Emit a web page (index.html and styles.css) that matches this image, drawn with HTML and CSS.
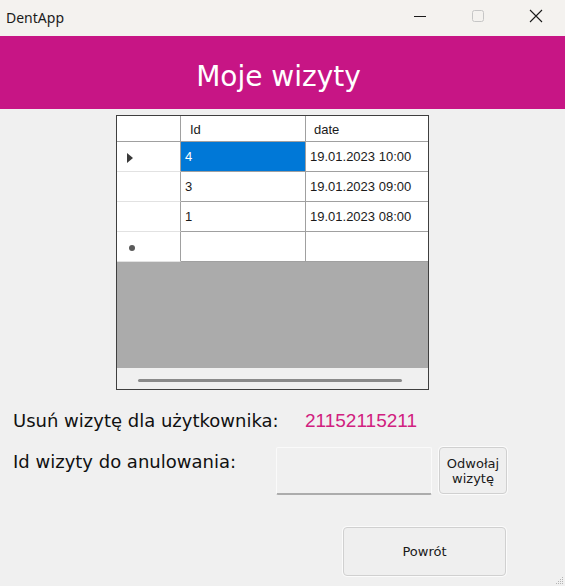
FILE: index.html
```html
<!DOCTYPE html>
<html lang="pl">
<head>
<meta charset="utf-8">
<title>DentApp</title>
<link rel="stylesheet" href="styles.css">
</head>
<body>
<div class="window">
  <div class="titlebar">
    <span class="app-name">DentApp</span>
    <div class="controls">
      <span class="ctl"><svg width="14" height="14" viewBox="0 0 14 14"><line x1="1" y1="7.5" x2="13" y2="7.5" stroke="#1a1a1a" stroke-width="1"/></svg></span>
      <span class="ctl"><svg width="14" height="14" viewBox="0 0 14 14"><rect x="1.5" y="1.5" width="11" height="11" rx="2" fill="none" stroke="#c6c6c6" stroke-width="1"/></svg></span>
      <span class="ctl"><svg width="14" height="14" viewBox="0 0 14 14"><path d="M1 1 L13 13 M13 1 L1 13" stroke="#1a1a1a" stroke-width="1.1"/></svg></span>
    </div>
  </div>
  <header class="banner"><h1 class="banner-title">Moje wizyty</h1></header>
  <main class="content">
    <div class="grid">
      <div class="grid-table">
        <div class="cell rh corner"></div>
        <div class="cell hd">Id</div>
        <div class="cell hd last">date</div>

        <div class="cell rh"><span class="arrow"></span></div>
        <div class="cell sel">4</div>
        <div class="cell last">19.01.2023 10:00</div>

        <div class="cell rh"></div>
        <div class="cell">3</div>
        <div class="cell last">19.01.2023 09:00</div>

        <div class="cell rh"></div>
        <div class="cell">1</div>
        <div class="cell last">19.01.2023 08:00</div>

        <div class="cell rh"><span class="newrow"></span></div>
        <div class="cell"></div>
        <div class="cell last"></div>
      </div>
      <div class="grid-empty"></div>
      <div class="grid-scroll"><div class="thumb"></div></div>
    </div>

    <div class="form">
      <div class="row row-user">
        <span class="label label-user">Usuń wizytę dla użytkownika:</span>
        <span class="user-id">21152115211</span>
      </div>
      <div class="row row-id">
        <span class="label label-id">Id wizyty do anulowania:</span>
        <input class="textbox" type="text" aria-label="Id wizyty">
        <button class="btn btn-cancel" type="button">Odwołaj<br>wizytę</button>
      </div>
      <div class="row row-back">
        <button class="btn btn-back" type="button">Powrót</button>
      </div>
    </div>
  </main>
  <svg class="grip" width="9" height="9" viewBox="0 0 9 9">
    <rect x="7" y="1" width="1" height="1" fill="#b4b4b4"/>
    <rect x="5" y="3" width="1" height="1" fill="#b4b4b4"/>
    <rect x="7" y="3" width="1" height="1" fill="#b4b4b4"/>
    <rect x="3" y="5" width="1" height="1" fill="#b4b4b4"/>
    <rect x="5" y="5" width="1" height="1" fill="#b4b4b4"/>
    <rect x="7" y="5" width="1" height="1" fill="#b4b4b4"/>
    <rect x="1" y="7" width="1" height="1" fill="#b4b4b4"/>
    <rect x="3" y="7" width="1" height="1" fill="#b4b4b4"/>
    <rect x="5" y="7" width="1" height="1" fill="#b4b4b4"/>
    <rect x="7" y="7" width="1" height="1" fill="#b4b4b4"/>
  </svg>
</div>
</body>
</html>
```

FILE: styles.css
```css
* { box-sizing: border-box; }

html, body {
  margin: 0;
  padding: 0;
}

body {
  width: 565px;
  height: 586px;
  overflow: hidden;
  background: #f0f0f0;
  font-family: "DejaVu Sans", sans-serif;
}

.window {
  position: relative;
  width: 565px;
  height: 586px;
  background: #f0f0f0;
}

/* title bar */
.titlebar {
  height: 36px;
  display: flex;
  align-items: center;
  background: #f4f2ef;
  padding-left: 6px;
}

.app-name {
  font-family: "Noto Sans", sans-serif;
  font-size: 14px;
  color: #1b1b1b;
  margin-top: -2px;
}

.controls {
  margin-left: auto;
  display: flex;
  height: 100%;
}

.ctl {
  width: 58px;
  height: 100%;
  display: flex;
  align-items: center;
  justify-content: center;
  padding-bottom: 4px;
}

/* banner */
.banner {
  height: 73px;
  background: #c71585;
  display: flex;
  align-items: center;
  justify-content: center;
  padding-right: 8px;
  padding-top: 8px;
}

.banner-title {
  margin: 0;
  color: #ffffff;
  font-family: "DejaVu Sans", sans-serif;
  font-weight: normal;
  font-size: 28px;
}

/* data grid */
.content {
  padding-top: 6px;
}

.grid {
  margin-left: 116px;
  width: 313px;
  border: 1px solid #3f3f3f;
  background: #ababab;
}

.grid-table {
  display: grid;
  grid-template-columns: 64px 125px 122px;
  grid-template-rows: 26px repeat(4, 30px);
}

.cell {
  background: #ffffff;
  border-right: 1px solid #a0a0a0;
  border-bottom: 1px solid #a0a0a0;
  font-family: "Liberation Sans", sans-serif;
  font-size: 13px;
  color: #1a1a1a;
  display: flex;
  align-items: center;
  padding-left: 4px;
}

.cell.last { border-right: none; }

.cell.hd {
  padding-left: 9px;
  padding-top: 2px;
}

.cell.hd.last { padding-left: 8px; }

.cell.rh {
  border-bottom-color: #e2e2e2;
  padding-left: 10px;
  padding-top: 2px;
}

.cell.rh.corner { border-bottom-color: #a0a0a0; }

.cell.sel {
  background: #0078d7;
  color: #ffffff;
}

.arrow {
  width: 0;
  height: 0;
  border-top: 5px solid transparent;
  border-bottom: 5px solid transparent;
  border-left: 6px solid #3a3a3a;
}

.newrow {
  width: 6px;
  height: 6px;
  border-radius: 50%;
  background: #5a5a5a;
  margin-left: 2px;
}

.grid-empty {
  height: 106px;
  background: #ababab;
}

.grid-scroll {
  height: 21px;
  background: #f0f0f0;
  padding-top: 11px;
  padding-left: 21px;
}

.thumb {
  width: 264px;
  height: 3px;
  border-radius: 2px;
  background: #8a8a8a;
}

/* form */
.form {
  padding-left: 13px;
  padding-top: 20px;
}

.row {
  display: flex;
}

.label {
  font-size: 18px;
  color: #111111;
  line-height: 21px;
}

.label-user { width: 292px; }

.user-id {
  font-family: "Liberation Sans", sans-serif;
  font-size: 19px;
  line-height: 21px;
  color: #d1207f;
}

.row-id {
  margin-top: 16px;
  align-items: flex-start;
}

.label-id {
  width: 263px;
  margin-top: 4px;
}

.textbox {
  width: 156px;
  height: 48px;
  background: #f0f0f0;
  border: 1px solid #fafafa;
  border-bottom: 2px solid #acacac;
  border-radius: 2px;
  margin: 0;
  padding: 0;
}

.btn {
  font-family: "DejaVu Sans", sans-serif;
  color: #1a1a1a;
  background: #efefef;
  border: 1px solid #d0d0d0;
  border-radius: 4px;
  box-shadow: 0 0 0 1px #fbfbfb;
  padding: 0;
  margin: 0;
}

.btn-cancel {
  margin-left: 7px;
  width: 68px;
  height: 47px;
  font-size: 13px;
  line-height: 15px;
}

.row-back {
  margin-top: 32px;
  padding-left: 330px;
}

.btn-back {
  width: 163px;
  height: 49px;
  font-size: 13px;
}

.grip {
  position: absolute;
  right: 1px;
  bottom: 1px;
}
```
